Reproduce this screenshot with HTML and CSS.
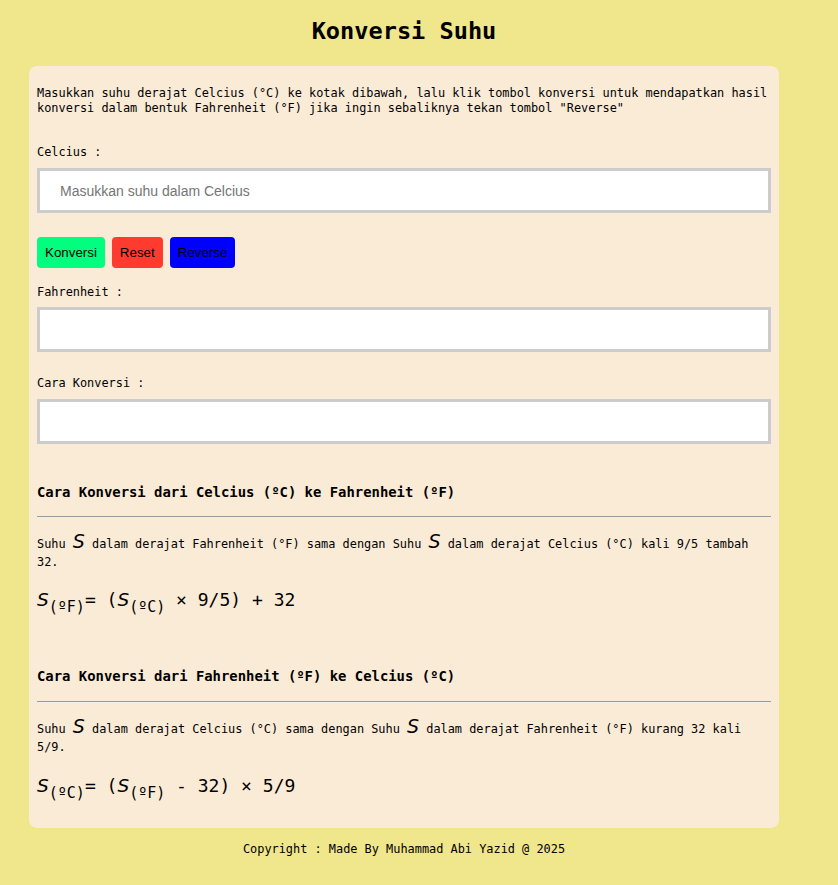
FILE: index.html
```html
<!DOCTYPE html>
<html lang="id">
<head>
<meta charset="utf-8">
<title>Konversi Suhu</title>
<link rel="stylesheet" href="styles.css">
</head>
<body>
<div class="page">
  <h1 class="title">Konversi Suhu</h1>
  <main class="card">
    <p class="intro">Masukkan suhu derajat Celcius (°C) ke kotak dibawah, lalu klik tombol konversi untuk mendapatkan hasil konversi dalam bentuk Fahrenheit (°F) jika ingin sebaliknya tekan tombol "Reverse"</p>
    <label class="field-label first" for="celcius">Celcius :</label>
    <input class="field" id="celcius" type="text" placeholder="Masukkan suhu dalam Celcius">
    <div class="actions">
      <button class="btn btn-convert" type="button">Konversi</button>
      <button class="btn btn-reset" type="button">Reset</button>
      <button class="btn btn-reverse" type="button">Reverse</button>
    </div>
    <label class="field-label second" for="fahrenheit">Fahrenheit :</label>
    <input class="field" id="fahrenheit" type="text">
    <label class="field-label third" for="cara">Cara Konversi :</label>
    <input class="field" id="cara" type="text">

    <h3 class="section-title first-section">Cara Konversi dari Celcius (ºC) ke Fahrenheit (ºF)</h3>
    <hr class="divider first-div">
    <p class="explain first-explain">Suhu <span class="var">S</span> dalam derajat Fahrenheit (°F) sama dengan Suhu <span class="var">S</span> dalam derajat Celcius (°C) kali 9/5 tambah 32.</p>
    <p class="formula first-formula"><span class="fvar">S</span><sub class="sub">(ºF)</sub>= (<span class="fvar">S</span><sub class="sub">(ºC)</sub> × 9/5) + 32</p>

    <h3 class="section-title second-section">Cara Konversi dari Fahrenheit (ºF) ke Celcius (ºC)</h3>
    <hr class="divider second-div">
    <p class="explain second-explain">Suhu <span class="var">S</span> dalam derajat Celcius (°C) sama dengan Suhu <span class="var">S</span> dalam derajat Fahrenheit (°F) kurang 32 kali 5/9.</p>
    <p class="formula second-formula"><span class="fvar">S</span><sub class="sub">(ºC)</sub>= (<span class="fvar">S</span><sub class="sub">(ºF)</sub> - 32) × 5/9</p>
  </main>
  <footer class="footer">Copyright : Made By Muhammad Abi Yazid @ 2025</footer>
</div>
</body>
</html>
```

FILE: styles.css
```css
html, body {
  margin: 0;
  padding: 0;
}

body {
  background: #f0e68c;
  font-family: "DejaVu Sans Mono", "Liberation Mono", monospace;
  font-size: 11.9px;
  line-height: 15px;
  color: #000;
}

.page {
  width: 750px;
  margin-left: 29px;
  padding-bottom: 20px;
}

.title {
  margin: 17px 0 21px;
  font-size: 23.6px;
  line-height: 28px;
  font-weight: bold;
  text-align: center;
}

.card {
  display: block;
  background: #faebd7;
  border-radius: 8px;
  padding: 8px 8px 30.5px;
}

.intro {
  margin: 12px 0 0;
}

.field-label {
  display: block;
  margin-bottom: 8px;
}

.field-label.first { margin-top: 29px; }
.field-label.second { margin-top: 17px; margin-bottom: 7px; }
.field-label.third { margin-top: 24px; }

.field {
  display: block;
  box-sizing: border-box;
  width: 100%;
  height: 45px;
  margin: 0;
  padding: 0 20px;
  border: 3px solid #cccccc;
  border-radius: 0;
  background: #fff;
  font-family: "Liberation Sans", Arial, sans-serif;
  font-size: 14px;
  color: #000;
  outline: none;
}

.field::placeholder {
  color: #757575;
}

.actions {
  display: flex;
  gap: 7px;
  margin-top: 24px;
}

.btn {
  border: none;
  border-radius: 4px;
  padding: 8px;
  font-family: "Liberation Sans", Arial, sans-serif;
  font-size: 13.33px;
  line-height: 15px;
  color: #000;
  cursor: pointer;
}

.btn-convert { background: #00ff7f; }
.btn-reset { background: #ff3b30; }
.btn-reverse { background: #0000ff; }

.section-title {
  margin: 0;
  font-size: 13.9px;
  line-height: 18px;
  font-weight: bold;
}

.first-section { margin-top: 39px; }
.second-section { margin-top: 55px; }

.divider {
  height: 0;
  margin: 0;
  border: 0;
  border-top: 1px solid #9c9a98;
  border-bottom: 1px solid #efefef;
}

.first-div { margin-top: 15px; }
.second-div { margin-top: 15.6px; }

.explain {
  margin: 18.3px 0 0;
  line-height: 17.6px;
}

.var {
  font-family: "DejaVu Sans", sans-serif;
  font-style: italic;
  font-size: 19px;
  line-height: 0;
}

.formula {
  margin: 17px 0 0;
  font-size: 18px;
  line-height: 24px;
}

.fvar {
  font-family: "DejaVu Sans", sans-serif;
  font-style: italic;
  font-size: 18.5px;
  line-height: 0;
}

.sub {
  font-size: 15px;
  line-height: 0;
  vertical-align: -6px;
}

.footer {
  margin-top: 14.4px;
  text-align: center;
}
```
